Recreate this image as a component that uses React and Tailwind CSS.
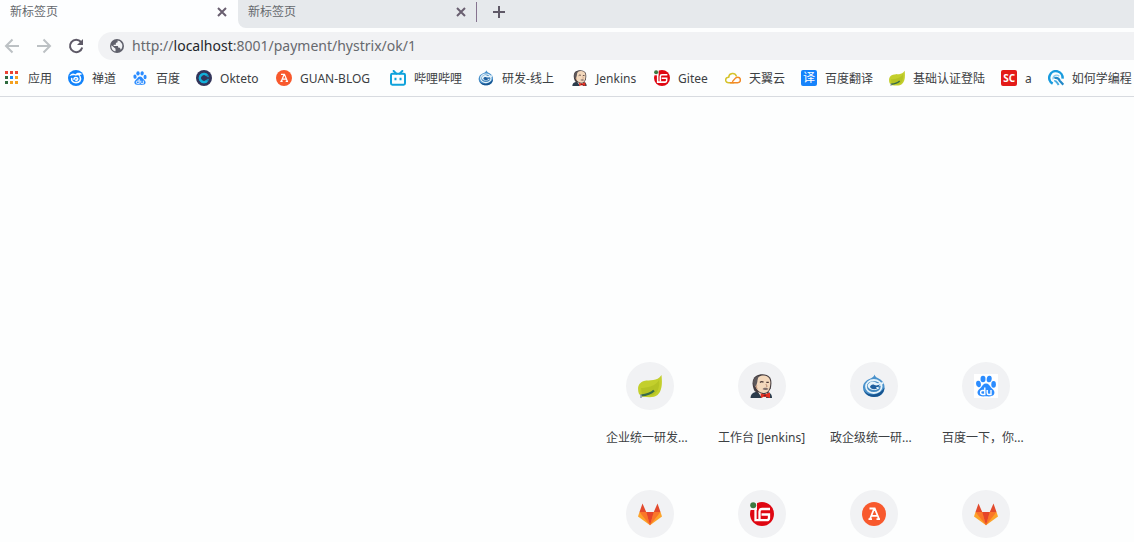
import React from "react";

const svg = (size, children, viewBox = "0 0 24 24") => (
  <svg width={size} height={size} viewBox={viewBox} fill="none" aria-hidden="true" className="shrink-0">
    {children}
  </svg>
);

const Apps = () =>
  svg(
    16,
    [
      ["#ea4335", 1, 1], ["#ea4335", 6, 1], ["#ea4335", 11, 1],
      ["#2f6b3f", 1, 6], ["#1a86f7", 6, 6], ["#f4a01f", 11, 6],
      ["#2f6b3f", 1, 11], ["#f4a01f", 6, 11], ["#f4a01f", 11, 11],
    ].map(([c, x, y]) => <rect key={`${x}-${y}`} x={x} y={y} width="3" height="3" fill={c} />),
    "0 0 16 16"
  );

const Zentao = () =>
  svg(16, <>
    <circle cx="12" cy="12" r="12" fill="#1183fb" />
    <path d="M2 9.500C4 5 8 4 11 6.500C13 4 17 3 21.500 6.500C19 6.500 17.500 7.500 18 9.500C16 8 14.500 7.500 12 8.500C8 7 5 8 2 9.500Z" fill="#fff" />
    <path d="M18 10c2.500 5-1 9-6 9-4.500 0-7-2.500-6.500-6M9 14c0-3.500 5.500-3.500 5.500-.5 0 1.500-1.500 2-2.800 1.500" stroke="#fff" strokeWidth="2.400" strokeLinecap="round" />
  </>);

const Baidu = ({ size = 16, plate = false }) =>
  svg(size, <>
    {plate && <rect width="24" height="24" fill="#fff" />}
    <g fill="#2b8cff">
      <ellipse cx="4.500" cy="10" rx="2.400" ry="3.300" transform="rotate(-8 4.500 10)" />
      <ellipse cx="9" cy="5" rx="2.500" ry="3.300" />
      <ellipse cx="15.200" cy="5" rx="2.500" ry="3.300" transform="rotate(8 15.200 5)" />
      <ellipse cx="19.600" cy="10.400" rx="2.300" ry="3.300" />
      <path d="M12 9.600c2.500 0 3.500 2.200 5 3.900 2 2 4 3.500 3.300 6.100-.8 2.900-4.300 3-8.300 2.700-4 .3-7.500.2-8.300-2.700-.7-2.600 1.300-4.100 3.300-6.100 1.500-1.700 2.500-3.900 5-3.900Z" />
    </g>
    <path d="M10.800 13.500v7H8.600a2 2 0 0 1 0-4h2.200M13.200 16v3c0 1 .6 1.500 1.600 1.500H17V16" stroke="#fff" strokeWidth="1.400" />
  </>);

const Okteto = () =>
  svg(16, <>
    <circle cx="12" cy="12" r="12" fill="#33355a" />
    <circle cx="12" cy="12" r="6.200" stroke="#1687b2" strokeWidth="3.400" />
    <path d="M16.400 7.600a6.200 6.200 0 1 0 0 8.800" stroke="#12b0d9" strokeWidth="3.600" />
    <path d="M16 12h4" stroke="#33355a" strokeWidth="2.500" />
  </>);

const Ablog = ({ size = 16 }) =>
  svg(size, <>
    <circle cx="12" cy="12" r="12" fill="#f8592d" />
    <path d="M7.500 6.500h5.200L17 17M12 7 8 17M9.500 13.800h5.600M6.500 17.200h3.500M14.500 17.200H18" stroke="#fff" strokeWidth="1.800" />
  </>);

const Bilibili = () =>
  svg(16, <>
    <path d="m5.500 1.500 4 4M18.500 1.500l-4 4" stroke="#0fa2db" strokeWidth="3" strokeLinecap="round" />
    <rect x="1.500" y="5.500" width="21" height="16.500" rx="2" stroke="#0fa2db" strokeWidth="3" />
    <path d="M8.200 11.500v4M15.800 11.500v4" stroke="#0fa2db" strokeWidth="3" />
  </>);

const Swirl = ({ size = 16 }) =>
  svg(size, <>
    <path d="M12.500.500c.5 2.300 2.500 3.300 5 4.500C21 7 23 10 22.500 14.500 22 20 17.500 23 12 23S1 19 1 13.500C1 9 4 6.500 7.500 5c3-1.200 4.500-2.500 5-4.500Z" fill="#4a92cc" />
    <path d="M1 11.500c-.5 8 8 10.500 14.500 8 3-1 5.500-3.500 7-6-.5 6.500-5 9.500-10.500 9.500S1 19.500 1 11.500Z" fill="#17548f" />
    <ellipse cx="11.800" cy="12.500" rx="7.800" ry="6.500" stroke="#e6f3fa" strokeWidth="1.800" fill="#4388bf" />
    <path d="M5.500 12c1-4 5-5.500 8.500-3.500 1.500 1 3 .8 7-.5l1 1-3 2.500-4 1 2.500 1.500c-4 3.500-10.500 2.500-12-2Z" fill="#e6f3fa" />
    <path d="M8 13c.5-2 2.500-3 4.500-2 1.500.8 3.500.5 6-1l-2.500 3h-2l1 1.500c-2.500 1.300-5.500.8-7-1.500Z" fill="#1f5f9e" />
  </>);

const Jenkins = ({ size = 16 }) =>
  svg(size, <>
    <path d="M.5 24c0-3.500 2-5 5-6h11c3.500 0 5.500 2.500 5.500 6Z" fill="#2b3b4b" />
    <path d="M4.500 17C1.500 11 2 4.500 6 2 10-.5 17-.5 20 3.500c2 3 1.500 7 .8 11l-3.300 5-8 1Z" fill="#443c3f" />
    <path d="M5 8C6 3.500 10 1.200 14 1.500c5 .4 6.800 4 6.300 8.500-.3 5-2 9-6.300 9C8.500 19 4.500 14 5 8Z" fill="#f3d8bc" />
    <path d="M3 8C3.500 4.500 6.500 2 9.500 1.800 8 3.500 7.500 5.500 7.300 8l-1 3.500L4 12.500Z" fill="#5d585b" />
    <path d="M10 8.500c1.200-1.200 2.500-1 3.500-.2M16.300 8.300h2.500" stroke="#4b3936" strokeWidth="1.300" />
    <path d="M15.800 10c1.500 2 1.500 2.600.3 2.800M7.200 11.500c-1.500.5-1 2.500.3 3" stroke="#c3947a" strokeWidth="1.100" />
    <path d="M12.500 15c1.500-1.800 4.500-1.500 6 0-1.500 1.200-4.500 1.500-6 0Z" fill="#81706c" />
    <path d="m8 18 4 6h4l1.500-5-4 1.500Z" fill="#f1f1eb" />
    <path d="m10.500 19.300 4 1.200 5.500-2V24l-5.500-1.500L11 24Z" fill="#e8301f" />
    <circle cx="14.800" cy="21.500" r="1.300" fill="#8b171b" />
  </>);

const Gitee = ({ size = 16 }) =>
  svg(size, <>
    <circle cx="12" cy="12" r="12" fill="#df0712" />
    <path d="M0 0h7v8H0Z" fill="#f7f8fa" />
    <circle cx="3.200" cy="3.200" r="3" fill="#3c7a41" />
    <path d="M5.500 7.500v10.700h11.200c1.200 0 2.300-1 2.300-2.300V12.500h-7.500" stroke="#fff" strokeWidth="2.300" />
    <path d="M20 7h-8c-1.800 0-2.500.8-2.500 2.500v8" stroke="#fff" strokeWidth="2.300" />
  </>);

const Cloud = () =>
  svg(16, <>
    <path d="M13 19H5.500c-6 0-6-8 0-8C6 4 15 3.500 17 9" stroke="#d5c32b" strokeWidth="2.200" strokeLinecap="round" />
    <path d="M8 19h11c5.500 0 5.500-8 0-8-4 0-5.500 4-7.500 6" stroke="#f28a27" strokeWidth="2.200" strokeLinecap="round" />
  </>);

const Tile = ({ className, children }) => (
  <span aria-hidden="true" className={`flex size-4 shrink-0 items-center justify-center rounded-xs text-white ${className}`}>
    {children}
  </span>
);

const Leaf = ({ size = 16 }) =>
  svg(size, <>
    <path d="M23.500 1c.8 8 .8 16-4 20-4 3.300-10 2-15 1.700L1 20C-1 14 0 9 6 7c6-1.500 13 1 17.500-6Z" fill="#c3cf2c" />
    <path d="M3 14C9 14 18 12 21 6c1 8-2 14-7 15.500L4 21Z" fill="#adbd20" opacity=".65" />
    <path d="M3 21.500c5-.5 10-2 13-5" stroke="#376b4a" strokeWidth="2.200" />
    <path d="M3 20.500v3.500" stroke="#8d9ba9" strokeWidth="1.500" />
  </>);

const Learn = () =>
  svg(16, <>
    <path d="M7 20.500A10 10 0 1 1 21.800 13" stroke="#189bde" strokeWidth="3.800" />
    <path d="M7.500 14c-.5-6 6-8 9.500-4.500" stroke="#8accee" strokeWidth="2" />
    <path d="M9.500 12c4-1 7 1 8 4l5.500 6" stroke="#2389c8" strokeWidth="3.400" />
    <path d="M9.500 16.500c3-1 4 2 6.500 6" stroke="#49ace0" strokeWidth="3" />
  </>);

const Gitlab = () =>
  svg(24, <>
    <path d="M4.500 1.500 8.200 10H1.500ZM19.500 1.500 15.800 10h6.700Z" fill="#e24a2d" />
    <path d="M1.500 10 0 14.500 12 23.300 24 14.500 22.500 10Z" fill="#fca32a" />
    <path d="M1.500 10h6.700L12 23.300ZM22.500 10h-6.700L12 23.300Z" fill="#fa7629" />
    <path d="M8.200 10h7.600L12 23.300Z" fill="#e5452c" />
  </>);

const bookmarks = [
  ["应用", <Apps />],
  ["禅道", <Zentao />],
  ["百度", <Baidu />],
  ["Okteto", <Okteto />, "min-w-10"],
  ["GUAN-BLOG", <Ablog />, "min-w-[74px]"],
  ["哔哩哔哩", <Bilibili />],
  ["研发-线上", <Swirl />, "min-w-[54px]"],
  ["Jenkins", <Jenkins />, "min-w-[42px]"],
  ["Gitee", <Gitee />, "min-w-[31px]"],
  ["天翼云", <Cloud />],
  ["百度翻译", <Tile className="bg-[#1683fb] text-xs leading-none">译</Tile>],
  ["基础认证登陆", <Leaf />],
  ["a", <Tile className="bg-[#e31b18] text-[10px] leading-none font-bold">SC</Tile>],
  ["如何学编程", <Learn />],
];

const shortcuts = [
  ["企业统一研发...", <Leaf size={24} />],
  ["工作台 [Jenkins]", <Jenkins size={24} />],
  ["政企级统一研...", <Swirl size={24} />],
  ["百度一下，你...", <Baidu size={24} plate />],
  ["", <Gitlab />, "GitLab"],
  ["", <Gitee size={24} />, "Gitee"],
  ["", <Ablog size={24} />, "GUAN-BLOG"],
  ["", <Gitlab />, "GitLab"],
];

function Tab({ active }) {
  return (
    <div className={`flex h-7 w-[238px] shrink-0 items-start justify-between pl-2.5 ${active ? "bg-[#fdfeff] pr-2.5" : "pr-[9px]"}`}>
      <button type="button" className="h-6 text-xs leading-6 text-[#65686d]">新标签页</button>
      <button type="button" aria-label="关闭标签页" className="flex h-6 w-3 items-center justify-center text-[#695f70]">
        {svg(12, <path d="m2 2 8 8m0-8-8 8" stroke="currentColor" strokeWidth="2" />, "0 0 12 12")}
      </button>
    </div>
  );
}

function NavButton({ label, className, children }) {
  return (
    <button type="button" aria-label={label} className={`flex h-7 w-8 shrink-0 items-center justify-center ${className}`}>
      {svg(16, <g stroke="currentColor" strokeWidth="2">{children}</g>, "0 0 16 16")}
    </button>
  );
}

export default function App() {
  return (
    <div className="min-h-screen overflow-hidden bg-[#fdfefe] font-['Noto_Sans','Noto_Sans_CJK_SC',sans-serif] text-[#3c4043]">
      <header>
        <div className="flex h-7 bg-[#fdfeff]">
          <Tab active />
          <div className="flex min-w-0 flex-1 rounded-bl-lg bg-[#e6e9ec]">
            <Tab />
            <span className="mt-0.5 h-5 w-px bg-[#86738f]" />
            <button type="button" aria-label="新建标签页" className="ml-3.5 flex h-6 w-4 items-center justify-center text-[#5f5967]">
              {svg(14, <path d="M7 1v12M1 7h12" stroke="currentColor" strokeWidth="2" />, "0 0 14 14")}
            </button>
          </div>
        </div>

        <div className="flex h-8 items-end">
          <div className="flex w-[98px] shrink-0">
            <NavButton label="后退" className="-ml-1 text-[#bcc1c4]"><path d="M15 8H2M8.500 1.500 2 8l6.500 6.500" /></NavButton>
            <NavButton label="前进" className="text-[#bcc1c4]"><path d="M1 8h13M7.500 1.500 14 8l-6.500 6.500" /></NavButton>
            <NavButton label="重新加载" className="text-[#5e5a67]">
              <path d="M13 4A6.200 6.200 0 1 0 14.200 9.500" />
              <path d="M15 1v6H9Z" fill="currentColor" stroke="none" />
            </NavButton>
          </div>
          <label className="flex h-7 min-w-0 flex-1 items-center rounded-l-full bg-[#f1f2f4] pl-3">
            {svg(14, <>
              <circle cx="12" cy="12" r="12" fill="#5f606b" />
              <path d="M13 2.500v3.200L10 7v3H6.500L6 12h7.500l1 3H17l1.500 3.500C21 16 22 11 20.500 8L17 4ZM2.500 10.500l7 6V21C5 20.500 1.500 16 2.500 10.500Z" fill="#f1f2f4" />
            </>)}
            <span className="relative ml-2 h-7 min-w-0 flex-1">
              <span aria-hidden="true" className="absolute inset-0 text-sm leading-7 whitespace-pre text-[#67696e]">
                http://<span className="text-[#24262a]">localhost</span>:8001/payment/hystrix/ok/1
              </span>
              <input
                aria-label="地址栏"
                defaultValue="http://localhost:8001/payment/hystrix/ok/1"
                className="relative block h-7 w-full bg-transparent text-sm leading-7 text-transparent caret-[#24262a] outline-none"
              />
            </span>
          </label>
        </div>

        <nav className="flex h-[37px] items-center gap-4 overflow-hidden border-b border-[#d8dbe0] pl-1">
          {bookmarks.map(([label, icon, width]) => (
            <a key={label} href="#" className="flex shrink-0 items-center gap-2 text-xs leading-6 whitespace-nowrap">
              {icon}
              <span className={`pt-0.5 ${width || ""}`}>{label}</span>
            </a>
          ))}
        </nav>
      </header>

      <main className="flex justify-end pt-[265px] pr-[92px]">
        <div className="grid grid-cols-4 gap-y-10">
          {shortcuts.map(([label, icon, name], i) => (
            <a key={i} href="#" aria-label={name} className="flex w-28 flex-col items-center gap-4">
              <span className="flex size-12 items-center justify-center rounded-full bg-[#f1f2f4]">{icon}</span>
              {label && <span className="w-[88px] text-xs leading-6 whitespace-nowrap">{label}</span>}
            </a>
          ))}
        </div>
      </main>
    </div>
  );
}
